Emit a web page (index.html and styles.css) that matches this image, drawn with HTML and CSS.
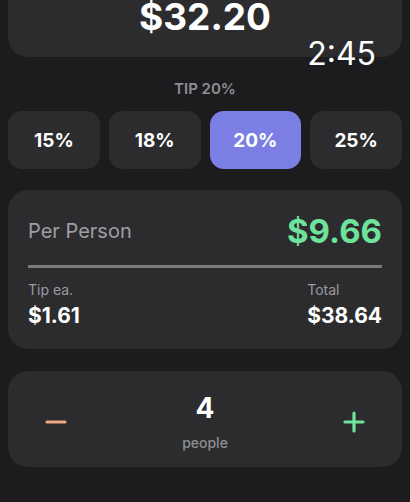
FILE: index.html
```html
<!DOCTYPE html>
<html>
<head>
    <link rel="stylesheet" href="styles.css">
</head>
<body>
    <div class="clock">2:45</div>
    <div id="app">
        <div class="card bill">
            <div class="bill-amount">$32.20</div>
        </div>

        <div class="tip-label">TIP 20%</div>
        <div class="tips">
            <button class="tip">15%</button>
            <button class="tip">18%</button>
            <button class="tip active">20%</button>
            <button class="tip">25%</button>
        </div>

        <div class="card result">
            <div class="result-main">
                <span class="result-label">Per Person</span>
                <span class="result-value">$9.66</span>
            </div>
            <div class="divider"></div>
            <div class="result-split">
                <div class="split-item">
                    <div class="split-label">Tip ea.</div>
                    <div class="split-value">$1.61</div>
                </div>
                <div class="split-item">
                    <div class="split-label">Total</div>
                    <div class="split-value">$38.64</div>
                </div>
            </div>
        </div>

        <div class="card people">
            <button class="step minus">
                <svg width="22" height="22" viewBox="0 0 22 22"><path d="M2 11H20" stroke="#f0a67e" stroke-width="3.2" stroke-linecap="round"/></svg>
            </button>
            <div class="count">
                <div class="count-num">4</div>
                <div class="count-label">people</div>
            </div>
            <button class="step plus">
                <svg width="22" height="22" viewBox="0 0 22 22"><path d="M2 11H20M11 2V20" stroke="#6fe39b" stroke-width="3.2" stroke-linecap="round"/></svg>
            </button>
        </div>
    </div>
</body>
</html>
```

FILE: styles.css
```css
body {
    margin: 0;
    background-color: #1c1c1e;
    color: #ffffff;
    font-family: Inter, "Noto Sans", sans-serif;
    overflow: hidden;
}

#app {
    padding: 0 8px;
}

.clock {
    position: absolute;
    top: 38px;
    right: 34px;
    font-size: 32px;
    line-height: 32px;
    z-index: 2;
}

.card {
    background-color: #2c2c2e;
    border-radius: 20px;
}

.bill {
    margin-top: -44px;
    padding: 42px 20px 22px;
    text-align: center;
}

.bill-amount {
    font-size: 37px;
    line-height: 37px;
    font-weight: 700;
}

.tip-label {
    margin-top: 23px;
    font-size: 15px;
    line-height: 18px;
    font-weight: 600;
    color: #8e8e93;
    text-align: center;
}

.tips {
    margin-top: 13px;
    display: grid;
    grid-template-columns: repeat(4, 1fr);
    gap: 9px;
}

button {
    font-family: inherit;
    border: none;
    cursor: pointer;
    color: #ffffff;
}

.tip {
    height: 58px;
    background-color: #2c2c2e;
    border-radius: 14px;
    font-size: 19px;
    font-weight: 700;
}

.tip.active {
    background-color: #7b7fe4;
}

.result {
    margin-top: 21px;
    padding: 22px 20px 21px;
}

.result-main {
    height: 38px;
    display: flex;
    justify-content: space-between;
    align-items: center;
    line-height: 38px;
}

.result-label {
    font-size: 20px;
    color: #9e9ea3;
}

.result-value {
    font-size: 33px;
    font-weight: 700;
    color: #6fe39b;
}

.divider {
    margin-top: 15px;
    height: 3px;
    background-color: #7a7a7c;
}

.result-split {
    margin-top: 13px;
    display: flex;
    justify-content: space-between;
}

.split-label {
    font-size: 14px;
    line-height: 17px;
    color: #9a9a9f;
}

.split-value {
    margin-top: 6px;
    font-size: 21px;
    line-height: 24px;
    font-weight: 700;
}

.people {
    margin-top: 22px;
    padding: 21px 26px 16px;
    display: flex;
    justify-content: space-between;
    align-items: center;
}

.step {
    width: 44px;
    height: 44px;
    background: none;
    padding: 0;
    display: flex;
    align-items: center;
    justify-content: center;
}

.count {
    text-align: center;
}

.count-num {
    font-size: 28px;
    line-height: 32px;
    font-weight: 700;
}

.count-label {
    margin-top: 10px;
    font-size: 14px;
    line-height: 17px;
    font-weight: 500;
    color: #8e8e93;
}
```
